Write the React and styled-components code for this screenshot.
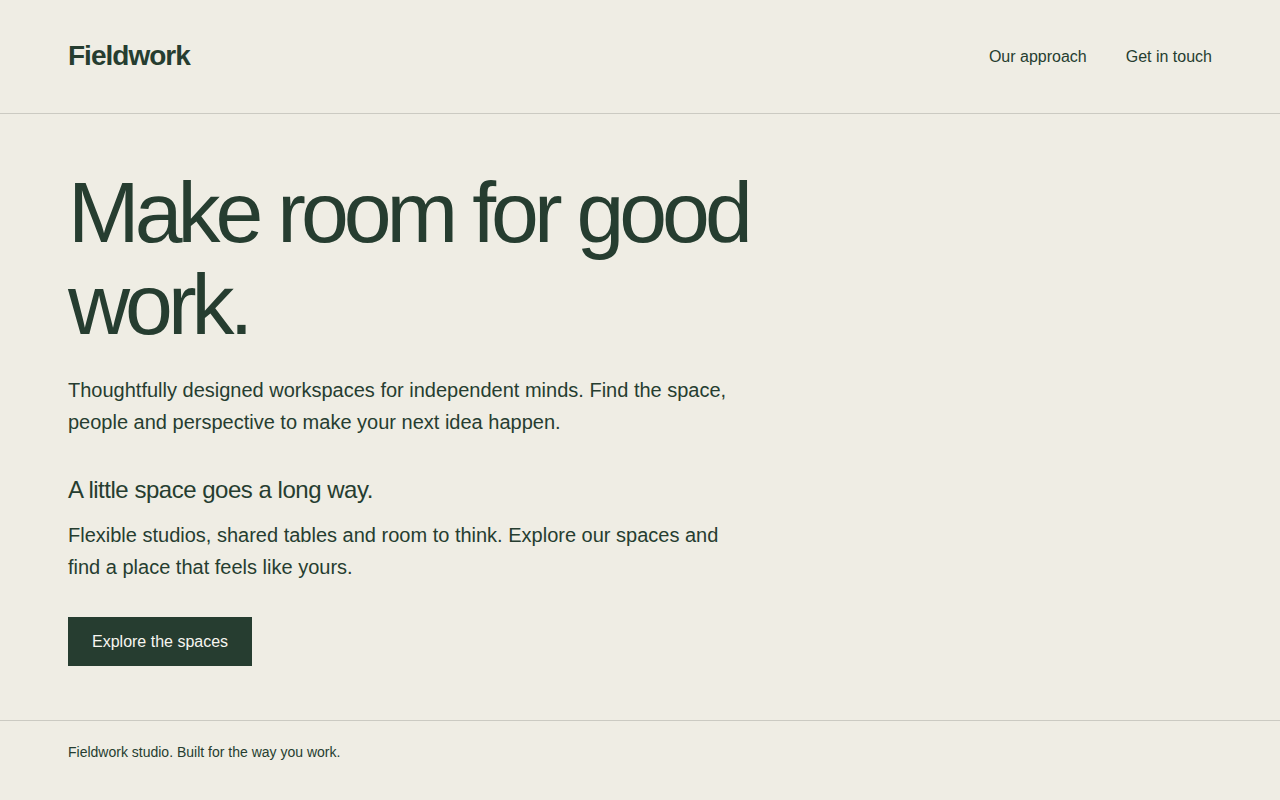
import React from "react";
import styled, { createGlobalStyle } from "styled-components";

const GlobalStyle = createGlobalStyle`
  * { box-sizing: border-box; }
  html, body {
    margin: 0;
    padding: 0;
    background: #efede4;
    color: #263d30;
    font-family: "Liberation Sans", Arial, sans-serif;
  }
`;

const Page = styled.div`
  min-height: 100vh;
  display: flex;
  flex-direction: column;
`;

const Header = styled.header`
  height: 114px;
  padding: 0 68px;
  display: flex;
  align-items: center;
  justify-content: space-between;
  border-bottom: 1px solid #cbcac2;
`;

const Logo = styled.a`
  font-size: 28px;
  font-weight: 700;
  letter-spacing: -0.035em;
  line-height: 1;
  color: #263d30;
  text-decoration: none;
  margin-bottom: 2px;
`;

const Nav = styled.nav`
  display: flex;
  gap: 39px;
`;

const NavLink = styled.a`
  font-size: 16px;
  color: #263d30;
  text-decoration: none;
`;

const Main = styled.main`
  flex: 1;
  padding: 52px 68px 54px;
`;

const Column = styled.div`
  max-width: 690px;
`;

const Headline = styled.h1`
  margin: 0;
  font-size: 86px;
  line-height: 92px;
  font-weight: 400;
  letter-spacing: -0.058em;
`;

const Lead = styled.p`
  margin: ${(p) => p.$top || 0}px 0 0;
  font-size: 20px;
  line-height: 32px;
  max-width: 680px;
`;

const SubHeading = styled.h2`
  margin: 37px 0 0;
  font-size: 24px;
  line-height: 30px;
  font-weight: 400;
  letter-spacing: -0.02em;
`;

const Button = styled.a`
  margin-top: 34px;
  display: inline-flex;
  align-items: center;
  height: 49px;
  padding: 0 24px;
  background: #263d30;
  color: #f7f6f0;
  font-size: 16px;
  text-decoration: none;
`;

const Footer = styled.footer`
  border-top: 1px solid #cbcac2;
  padding: 21px 68px 38px;
  font-size: 14px;
  line-height: 20px;
`;

export default function App() {
  return (
    <Page>
      <GlobalStyle />
      <Header>
        <Logo href="#">Fieldwork</Logo>
        <Nav>
          <NavLink href="#">Our approach</NavLink>
          <NavLink href="#">Get in touch</NavLink>
        </Nav>
      </Header>
      <Main>
        <Column>
          <Headline>Make room for good work.</Headline>
          <Lead $top={24}>
            Thoughtfully designed workspaces for independent minds. Find the space,
            people and perspective to make your next idea happen.
          </Lead>
          <SubHeading>A little space goes a long way.</SubHeading>
          <Lead $top={14}>
            Flexible studios, shared tables and room to think. Explore our spaces and
            find a place that feels like yours.
          </Lead>
          <Button href="#">Explore the spaces</Button>
        </Column>
      </Main>
      <Footer>Fieldwork studio. Built for the way you work.</Footer>
    </Page>
  );
}
